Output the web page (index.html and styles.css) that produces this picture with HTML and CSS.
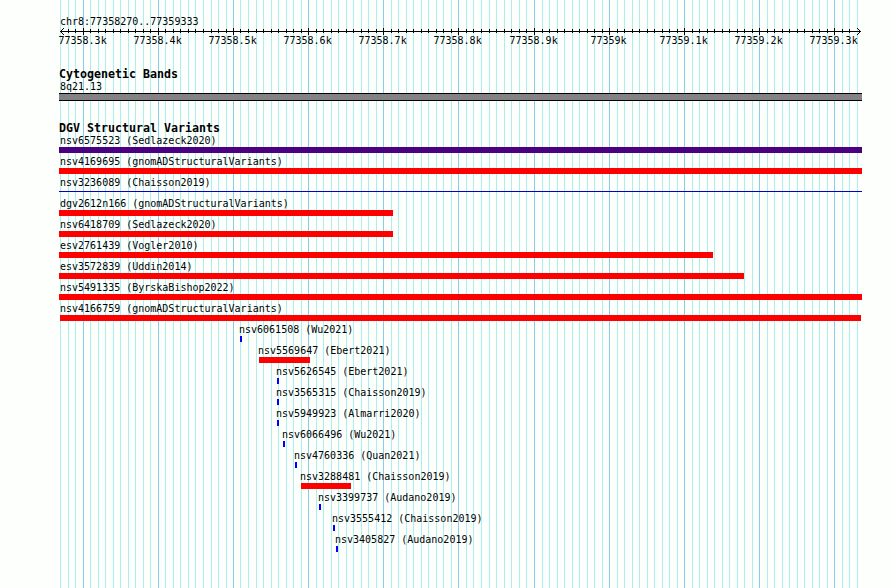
FILE: index.html
```html
<!DOCTYPE html>
<html lang="en">
<head>
    <meta charset="UTF-8">
    <title>chr8:77358270..77359333</title>
    <link rel="stylesheet" href="styles.css">
</head>
<body>
    <div class="browser">
        <svg id="grid" class="grid" width="890" height="588" shape-rendering="crispEdges"></svg>

        <div class="region">chr8:77358270..77359333</div>
        <svg id="ruler" class="ruler" width="890" height="32"></svg>

        <h2 class="cytoTitle">Cytogenetic Bands</h2>
        <div class="label">8q21.13</div>
        <div class="band"></div>

        <h2 class="dgvTitle">DGV Structural Variants</h2>
        <div id="variants"></div>
    </div>

    <script>
        const svgNS = 'http://www.w3.org/2000/svg';
        // grid columns, one every 10 bp starting at 77358270
        const ticks = [
            60, 68, 75, 83, 90, 98, 105, 113, 120, 128, 135, 143, 150, 158, 165, 173, 180, 188, 195, 203,
            211, 218, 226, 233, 240, 248, 256, 263, 271, 278, 286, 293, 301, 308, 316, 323, 331, 338, 346, 353,
            361, 368, 376, 383, 391, 398, 406, 413, 421, 428, 436, 443, 451, 458, 466, 473, 481, 489, 496, 504,
            511, 519, 526, 534, 542, 549, 557, 564, 572, 579, 587, 594, 602, 609, 617, 624, 632, 639, 647, 654,
            662, 669, 677, 684, 692, 699, 707, 714, 722, 729, 737, 744, 752, 759, 767, 774, 782, 789, 797, 804,
            812, 819, 827, 834, 842, 849, 857
        ];
        const names = ['77358.3k', '77358.4k', '77358.5k', '77358.6k', '77358.7k', '77358.8k',
            '77358.9k', '77359k', '77359.1k', '77359.2k', '77359.3k'];

        // name, label x, bar x, bar width, type
        const variants = [
            ['nsv6575523 (Sedlazeck2020)', 60, 59, 803, 'complex'],
            ['nsv4169695 (gnomADStructuralVariants)', 60, 59, 803, 'loss'],
            ['nsv3236089 (Chaisson2019)', 60, 59, 803, 'line'],
            ['dgv2612n166 (gnomADStructuralVariants)', 60, 59, 334, 'loss'],
            ['nsv6418709 (Sedlazeck2020)', 60, 59, 334, 'loss'],
            ['esv2761439 (Vogler2010)', 60, 59, 654, 'loss'],
            ['esv3572839 (Uddin2014)', 60, 59, 685, 'loss'],
            ['nsv5491335 (ByrskaBishop2022)', 60, 59, 803, 'loss'],
            ['nsv4166759 (gnomADStructuralVariants)', 60, 60, 801, 'loss'],
            ['nsv6061508 (Wu2021)', 239, 240, 2, 'gain'],
            ['nsv5569647 (Ebert2021)', 258, 259, 51, 'loss'],
            ['nsv5626545 (Ebert2021)', 276, 277, 2, 'gain'],
            ['nsv3565315 (Chaisson2019)', 276, 277, 2, 'gain'],
            ['nsv5949923 (Almarri2020)', 276, 277, 2, 'gain'],
            ['nsv6066496 (Wu2021)', 282, 283, 2, 'gain'],
            ['nsv4760336 (Quan2021)', 294, 295, 2, 'gain'],
            ['nsv3288481 (Chaisson2019)', 300, 301, 50, 'loss'],
            ['nsv3399737 (Audano2019)', 318, 319, 2, 'gain'],
            ['nsv3555412 (Chaisson2019)', 332, 333, 2, 'gain'],
            ['nsv3405827 (Audano2019)', 335, 336, 2, 'gain']
        ];

        function addRect(parent, className, x, y, w, h) {
            const rect = document.createElementNS(svgNS, 'rect');
            rect.setAttribute('class', className);
            rect.setAttribute('x', x);
            rect.setAttribute('y', y);
            rect.setAttribute('width', w);
            rect.setAttribute('height', h);
            parent.appendChild(rect);
        }

        function drawArrow(ruler, d) {
            const path = document.createElementNS(svgNS, 'path');
            path.setAttribute('class', 'arrow');
            path.setAttribute('d', d);
            ruler.appendChild(path);
        }

        function drawScale() {
            const grid = document.getElementById('grid');
            const ruler = document.getElementById('ruler');
            addRect(ruler, 'tick', 60, 5, 801, 1);
            drawArrow(ruler, 'M64 2 L60.5 5.5 L64 9');
            drawArrow(ruler, 'M857 2 L860.5 5.5 L857 9');

            ticks.forEach((x, i) => {
                const major = i % 10 === 3;
                addRect(grid, major ? 'major' : 'minor', x, 0, 1, 588);
                if (i > 0 && i < ticks.length - 1) {
                    addRect(ruler, 'tick', x, major ? 2 : 3, 1, major ? 7 : 4);
                }
                if (major) {
                    const name = names[(i - 3) / 10];
                    const text = document.createElementNS(svgNS, 'text');
                    text.setAttribute('x', x - name.length * 3 - 0.5);
                    text.setAttribute('y', 18);
                    text.textContent = name;
                    ruler.appendChild(text);
                }
            });
        }

        function drawVariants() {
            const list = document.getElementById('variants');
            variants.forEach(([name, labelX, x, width, type]) => {
                const row = document.createElement('div');
                row.className = 'variant';
                const label = document.createElement('div');
                label.className = 'name';
                label.style.marginLeft = `${labelX}px`;
                label.textContent = name;
                const bar = document.createElement('div');
                bar.className = `bar ${type}`;
                bar.style.marginLeft = `${x}px`;
                bar.style.width = `${width}px`;
                row.append(label, bar);
                list.appendChild(row);
            });
        }

        drawScale();
        drawVariants();
    </script>
</body>
</html>
```
FILE: styles.css
```css
body {
    margin: 0;
    background-color: #fdfffc;
    color: #000;
    font-family: 'DejaVu Sans Mono', monospace;
    font-size: 10px;
    line-height: 14px;
}

.browser {
    position: relative;
    width: 890px;
    height: 588px;
    overflow: hidden;
    padding-top: 15px;
    box-sizing: border-box;
}

.grid {
    position: absolute;
    left: 0;
    top: 0;
    z-index: -1;
}

.minor {
    fill: #afeeee;
}

.major {
    fill: #87ceeb;
}

.region, .label {
    height: 12px;
    margin-left: 60px;
    white-space: pre;
}

.region {
    height: 11px;
}

.ruler {
    display: block;
    font-size: 10px;
}

.tick {
    fill: #000;
}

.arrow {
    fill: none;
    stroke: #000;
    stroke-width: 1;
}

h2 {
    margin: 0 0 0 59px;
    height: 12px;
    font-size: 11.63px;
    font-weight: bold;
    line-height: 12px;
}

.cytoTitle {
    margin-top: 10px;
}

.band {
    width: 803px;
    height: 8px;
    box-sizing: border-box;
    margin-left: 59px;
    margin-top: 1px;
    background-color: #848284;
    border-top: 1px solid #000;
    border-bottom: 1px solid #000;
}

.dgvTitle {
    margin-top: 21px;
}

.variant {
    height: 21px;
}

.name {
    height: 13px;
    white-space: pre;
}

.bar {
    height: 6px;
}

.loss {
    background-color: #ff0000;
}

.gain {
    background-color: #0000ff;
}

.complex {
    background-color: #4b0082;
}

.line {
    height: 1px;
    margin-top: 2px;
    background-color: #0000c8;
}
```
